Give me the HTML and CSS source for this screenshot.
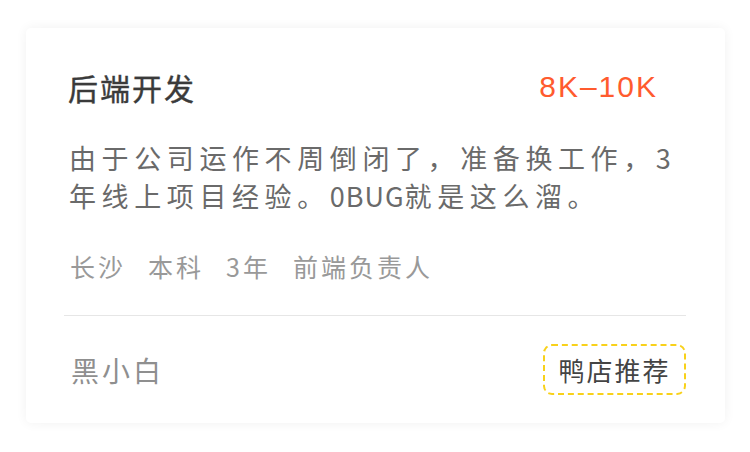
FILE: index.html
```html
<!DOCTYPE html>
<html lang="zh-CN">
<head>
<meta charset="utf-8">
<link rel="stylesheet" href="styles.css">
</head>
<body>
<div class="page">
  <div class="card">
    <div class="head">
      <div class="title">后端开发</div>
      <div class="salary">8K–10K</div>
    </div>
    <p class="desc">由于公司运作不周倒闭了，准备换工作，3年线上项目经验。<span class="latin">0BUG</span>就是这么溜。</p>
    <div class="tags">
      <span class="tag">长沙</span>
      <span class="tag">本科</span>
      <span class="tag">3年</span>
      <span class="tag">前端负责人</span>
    </div>
    <div class="divider"></div>
    <div class="foot">
      <span class="name">黑小白</span>
      <span class="badge">鸭店推荐</span>
    </div>
  </div>
</div>
</body>
</html>
```
FILE: styles.css
```css
* { box-sizing: border-box; }
html, body { margin: 0; padding: 0; background: #ffffff; }
body {
  font-family: "Noto Sans CJK SC", "Noto Sans", sans-serif;
}
.page {
  padding: 28px 25px 29px 26px;
}
.card {
  width: 699px;
  height: 395px;
  background: #fff;
  border-radius: 5px;
  box-shadow: 0 0 12px rgba(0, 0, 0, 0.06);
  padding: 39px 39px 28px 38px;
  display: flex;
  flex-direction: column;
}
.head {
  display: flex;
  justify-content: space-between;
  align-items: center;
  height: 40px;
  padding: 0 28px 0 4px;
}
.title {
  font-size: 30px;
  font-weight: 400;
  letter-spacing: 2px;
  color: #3a3a3a;
  line-height: 40px;
  -webkit-text-stroke: 0.4px #3a3a3a;
}
.salary {
  font-family: "Liberation Sans", "Noto Sans", sans-serif;
  font-size: 30px;
  letter-spacing: 2px;
  color: #ff5b2e;
  line-height: 40px;
}
.desc {
  margin: 32px 0 0 0;
  padding-left: 5px;
  font-size: 27px;
  line-height: 38px;
  letter-spacing: 5.6px;
  color: #6a6a6a;
}
.latin {
  letter-spacing: 1px;
}
.tags {
  margin-top: 33px;
  padding-left: 6px;
  display: flex;
  gap: 22px;
  line-height: 36px;
}
.tag {
  font-size: 25px;
  letter-spacing: 3px;
  color: #999;
}
.divider {
  margin-top: 31px;
  height: 1px;
  background: #e6e6e6;
}
.foot {
  margin-top: 28px;
  display: flex;
  justify-content: space-between;
  align-items: center;
  padding-left: 7px;
}
.name {
  font-size: 28px;
  letter-spacing: 3px;
  color: #8f8f8f;
}
.badge {
  height: 51px;
  width: 143px;
  display: flex;
  align-items: center;
  justify-content: center;
  border: 2px dashed #f8d11a;
  border-radius: 9px;
  font-size: 26px;
  letter-spacing: 2px;
  color: #444;
}
```
